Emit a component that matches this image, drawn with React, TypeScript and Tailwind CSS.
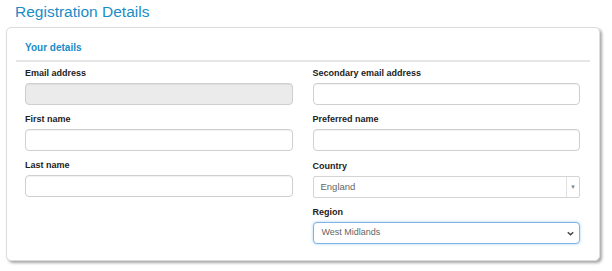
import React from "react";

const font = { fontFamily: '"Liberation Sans", Arial, sans-serif' };

function Label({ children }: { children: React.ReactNode }) {
  return (
    <div className="text-[9px] font-bold leading-[14px] text-[#222]">{children}</div>
  );
}

function Input({ disabled }: { disabled?: boolean }) {
  return (
    <div
      className={`mt-[3px] h-[22px] rounded-[4px] border border-[#cfcfcf] shadow-[inset_0_1px_1px_rgba(0,0,0,0.06)] ${
        disabled ? "bg-[#ebebeb]" : "bg-white"
      }`}
    />
  );
}

export default function App() {
  return (
    <div className="w-[612px] h-[271px] bg-white overflow-hidden" style={font}>
      <h1 className="pl-[15px] pt-[1px] text-[15.5px] leading-[22px] text-[#1b8cc6] font-normal">
        Registration Details
      </h1>
      <div className="ml-[6px] mt-[4px] w-[594px] h-[234px] rounded-[5px] border border-[#dcdcdc] bg-white shadow-[2px_2px_3px_rgba(0,0,0,0.35)]">
        <div className="mx-[9px] h-[34px] border-b-2 border-[#e6e6e6] flex items-center pl-[9px] pt-[7px]">
          <span className="text-[10px] font-bold text-[#1b8cc6]">Your details</span>
        </div>
        <div className="pl-[18px] pr-[19px] pt-[4px] grid grid-cols-2 gap-x-[20px]">
          <div className="flex flex-col">
            <Label>Email address</Label>
            <Input disabled />
            <div className="h-[7px]" />
            <Label>First name</Label>
            <Input />
            <div className="h-[7px]" />
            <Label>Last name</Label>
            <Input />
          </div>
          <div className="flex flex-col">
            <Label>Secondary email address</Label>
            <Input />
            <div className="h-[7px]" />
            <Label>Preferred name</Label>
            <Input />
            <div className="h-[8px]" />
            <Label>Country</Label>
            <div className="mt-[3px] h-[22px] rounded-[2px] border border-[#d4d4d4] bg-white flex items-center">
              <span className="flex-1 pl-[7px] text-[9.5px] text-[#666]">England</span>
              <div className="w-[13px] h-full border-l border-[#e0e0e0] flex items-center justify-center">
                <span className="text-[6px] text-[#888] leading-none">▼</span>
              </div>
            </div>
            <div className="h-[7px]" />
            <Label>Region</Label>
            <div className="mt-[3px] h-[22px] rounded-[4px] border border-[#7fb4e3] bg-white flex items-center shadow-[0_0_3px_rgba(102,175,233,0.6)]">
              <span className="flex-1 pl-[8px] text-[9px] text-[#666]">West Midlands</span>
              <svg width="9" height="9" viewBox="0 0 10 10" className="mr-[4px]">
                <path d="M2 3.5 L5 6.5 L8 3.5" fill="none" stroke="#444" strokeWidth="1.6" />
              </svg>
            </div>
          </div>
        </div>
      </div>
    </div>
  );
}
